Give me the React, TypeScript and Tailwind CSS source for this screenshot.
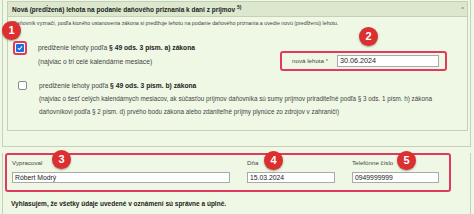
import React from 'react';

function Badge({ n, className }: { n: string; className: string }) {
  return (
    <div
      className={`absolute w-[19px] h-[19px] rounded-full bg-[#dc2f2f] text-white font-bold text-[11px] leading-[19px] text-center shadow-[0_1px_2px_rgba(0,0,0,0.35)] ${className}`}
    >
      {n}
    </div>
  );
}

function Field({ label, value, width }: { label: string; value: string; width: string }) {
  return (
    <div className="flex flex-col">
      <div className="h-[16px] text-[6.2px] leading-[14px] text-[#444]">{label}</div>
      <div className={`${width} h-[11px] bg-white border border-[#a9a9a9] text-[6.8px] leading-[9px] pl-[2px] text-[#222]`}>
        {value}
      </div>
    </div>
  );
}

export default function App() {
  return (
    <div className="relative w-[474px] h-[214px] overflow-hidden bg-[#eff8e5] font-['Liberation_Sans',Arial,sans-serif] text-[#333]">
      {/* horní sekce */}
      <div className="ml-[2px] w-[469px] h-[147px] border-l border-r border-b border-[#c6d0b9] pt-[1px]">
        <div className="ml-[4px] w-[461px] h-[130px] border border-[#c6d0b9]">
          <div className="h-[15px] bg-[#dce8cd] border-b border-[#c6d0b9] flex items-center justify-between pl-[4px] pr-[3px]">
            <span className="text-[6.5px] font-bold text-[#222] mt-[1px]">
              Nová (predĺžená) lehota na podanie daňového priznania k dani z príjmov <sup className="text-[5px]">5)</sup>
            </span>
            <span className="text-[6px] text-[#555]">^</span>
          </div>

          <div className="pl-[5px] mt-[1px] h-[10px] text-[5.3px] leading-[10px] text-[#444]">
            Daňovník vyznačí, podľa ktorého ustanovenia zákona si predlžuje lehotu na podanie daňového priznania a uvedie novú (predĺženú) lehotu.
          </div>

          {/* riadok a) */}
          <div className="flex mt-[13px]">
            <div className="ml-[5px] w-[14px] h-[14px] border-2 border-[#e23a5e] rounded-[3px] bg-white flex items-center justify-center">
              <div className="w-[8px] h-[8px] bg-[#1e6fdc] rounded-[1px] flex items-center justify-center">
                <svg width="6" height="6" viewBox="0 0 10 10">
                  <path d="M1.5 5.2 L4 7.6 L8.6 2.4" fill="none" stroke="white" strokeWidth="1.8" />
                </svg>
              </div>
            </div>
            <div className="ml-[11px] w-[240px] text-[6.7px] leading-[14px] text-[#444]">
              <div>
                predĺženie lehoty podľa <span className="font-bold text-[#222]">§ 49 ods. 3 písm. a) zákona</span>
              </div>
              <div>(najviac o tri celé kalendárne mesiace)</div>
            </div>
            <div className="ml-[2px] mt-[10px] w-[167px] h-[20px] border-2 border-[#e23a5e] rounded-[3px] flex items-center">
              <span className="ml-[10px] w-[45px] text-[6.2px] text-[#444]">
                nová lehota <span className="text-[#c33]">*</span>
              </span>
              <div className="w-[102px] h-[12px] bg-white border border-[#a9a9a9] text-[7.2px] leading-[10px] pl-[2px] text-[#222]">
                30.06.2024
              </div>
            </div>
          </div>

          {/* riadok b) */}
          <div className="flex mt-[8px]">
            <div className="ml-[10px] mt-[2px] w-[9px] h-[9px] border border-[#8a8a8a] rounded-[2px] bg-white"></div>
            <div className="ml-[12px] text-[6.3px] leading-[13px] text-[#444]">
              <div className="text-[6.7px]">
                predĺženie lehoty podľa <span className="font-bold text-[#222]">§ 49 ods. 3 písm. b) zákona</span>
              </div>
              <div>
                (najviac o šesť celých kalendárnych mesiacov, ak súčasťou príjmov daňovníka sú sumy príjmov priraditeľné podľa § 3 ods. 1 písm. h) zákona
              </div>
              <div>
                daňovníkovi podľa § 2 písm. d) prvého bodu zákona alebo zdaniteľné príjmy plynúce zo zdrojov v zahraničí)
              </div>
            </div>
          </div>
        </div>
      </div>

      {/* dolná sekcia */}
      <div className="ml-[2px] w-[469px] h-[67px] border-l border-r border-[#c6d0b9]">
        <div className="ml-[2px] mt-[6px] w-[446px] h-[39px] border-2 border-[#e23a5e] rounded-[3px] flex gap-[17px] pl-[5px] pt-[1px]">
          <Field label="Vypracoval" value="Róbert Modrý" width="w-[218px]" />
          <Field label="Dňa" value="15.03.2024" width="w-[88px]" />
          <Field label="Telefónne číslo" value="0949999999" width="w-[87px]" />
        </div>
        <div className="ml-[8px] mt-[7px] text-[6.5px] font-bold text-[#222]">
          Vyhlasujem, že všetky údaje uvedené v oznámení sú správne a úplné.
        </div>
      </div>

      <Badge n="1" className="left-[2px] top-[21px]" />
      <Badge n="2" className="left-[359px] top-[27px]" />
      <Badge n="3" className="left-[52px] top-[150px]" />
      <Badge n="4" className="left-[264px] top-[151px]" />
      <Badge n="5" className="left-[397px] top-[151px]" />
    </div>
  );
}
